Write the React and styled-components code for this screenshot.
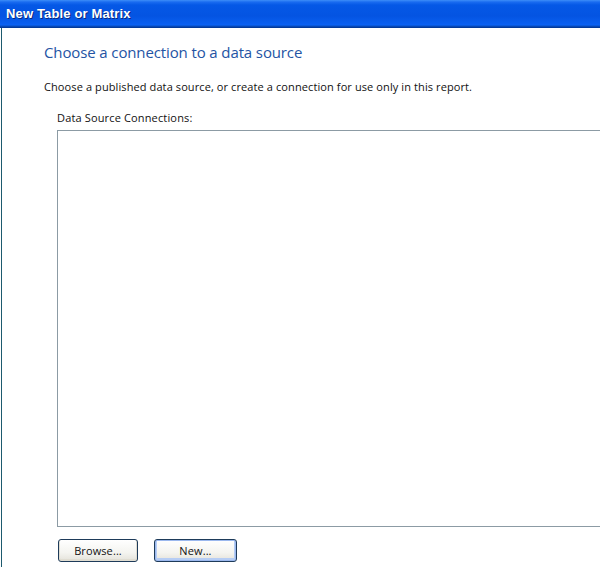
import React from "react";
import styled, { createGlobalStyle } from "styled-components";

const Global = createGlobalStyle`
  html, body { margin: 0; padding: 0; background: #ffffff; }
  body { width: 600px; height: 567px; overflow: hidden; }
`;

const Window = styled.div`
  width: 600px;
  height: 567px;
  display: flex;
  flex-direction: column;
  background: #ffffff;
  overflow: hidden;
`;

const TitleBar = styled.div`
  height: 28px;
  flex: 0 0 28px;
  box-sizing: border-box;
  display: flex;
  align-items: center;
  padding: 0 0 1px 6px;
  background: linear-gradient(
    to bottom,
    #3d8ef8 0px,
    #1a6cf0 2px,
    #0558e6 5px,
    #0454e2 16px,
    #0a5ff0 24px,
    #0b63f4 25px,
    #0a4fc4 26px,
    #00338f 28px
  );
  color: #ffffff;
  font-family: "Liberation Sans", Arial, sans-serif;
  font-weight: bold;
  font-size: 13px;
  letter-spacing: 0.15px;
  text-shadow: 1px 1px 0 #0a2a80;
`;

const Body = styled.div`
  flex: 1;
  display: flex;
  flex-direction: column;
  margin-left: 1px;
  border-left: 1px solid #1d5a6e;
  padding: 14px 0 0 42px;
  font-family: "Open Sans", "Noto Sans", sans-serif;
  color: #111111;
`;

const Heading = styled.h1`
  margin: 0;
  font-weight: normal;
  font-size: 15px;
  line-height: 20px;
  color: #2454a4;
  letter-spacing: -0.12px;
`;

const Paragraph = styled.p`
  margin: 17px 0 0 0;
  font-size: 11px;
  line-height: 16px;
  letter-spacing: 0.1px;
`;

const Section = styled.div`
  margin-left: 13px;
  margin-top: 15px;
  display: flex;
  flex-direction: column;
`;

const Label = styled.div`
  font-size: 11px;
  line-height: 16px;
  letter-spacing: 0.15px;
`;

const ListBox = styled.div`
  margin-top: 4px;
  height: 397px;
  box-sizing: border-box;
  border: 1px solid #8c9ba4;
  border-right: none;
  margin-right: -10px;
  background: #ffffff;
`;

const Buttons = styled.div`
  display: flex;
  gap: 16px;
  margin-top: 12px;
  padding-left: 1px;
`;

const Button = styled.button`
  width: ${(p) => p.$w}px;
  height: 23px;
  box-sizing: border-box;
  border-radius: 3px;
  border: 1px solid #1e3b5a;
  background: linear-gradient(to bottom, #ffffff 0%, #f4f4f0 60%, #e4e2da 100%);
  box-shadow: ${(p) =>
    p.$default
      ? "inset 0 0 0 1px #9bb8ee, inset 0 -1px 0 2px #b6cdf4"
      : "inset 0 -1px 0 1px #e0ddd2"};
  font-family: "Open Sans", "Noto Sans", sans-serif;
  font-size: 11px;
  color: #111111;
  padding: 0;
  letter-spacing: 0.1px;
`;

export default function App() {
  return (
    <>
      <Global />
      <Window>
        <TitleBar>New Table or Matrix</TitleBar>
        <Body>
          <Heading>Choose a connection to a data source</Heading>
          <Paragraph>
            Choose a published data source, or create a connection for use only in this report.
          </Paragraph>
          <Section>
            <Label>Data Source Connections:</Label>
            <ListBox />
            <Buttons>
              <Button $w={80}>Browse...</Button>
              <Button $w={83} $default>New...</Button>
            </Buttons>
          </Section>
        </Body>
      </Window>
    </>
  );
}
